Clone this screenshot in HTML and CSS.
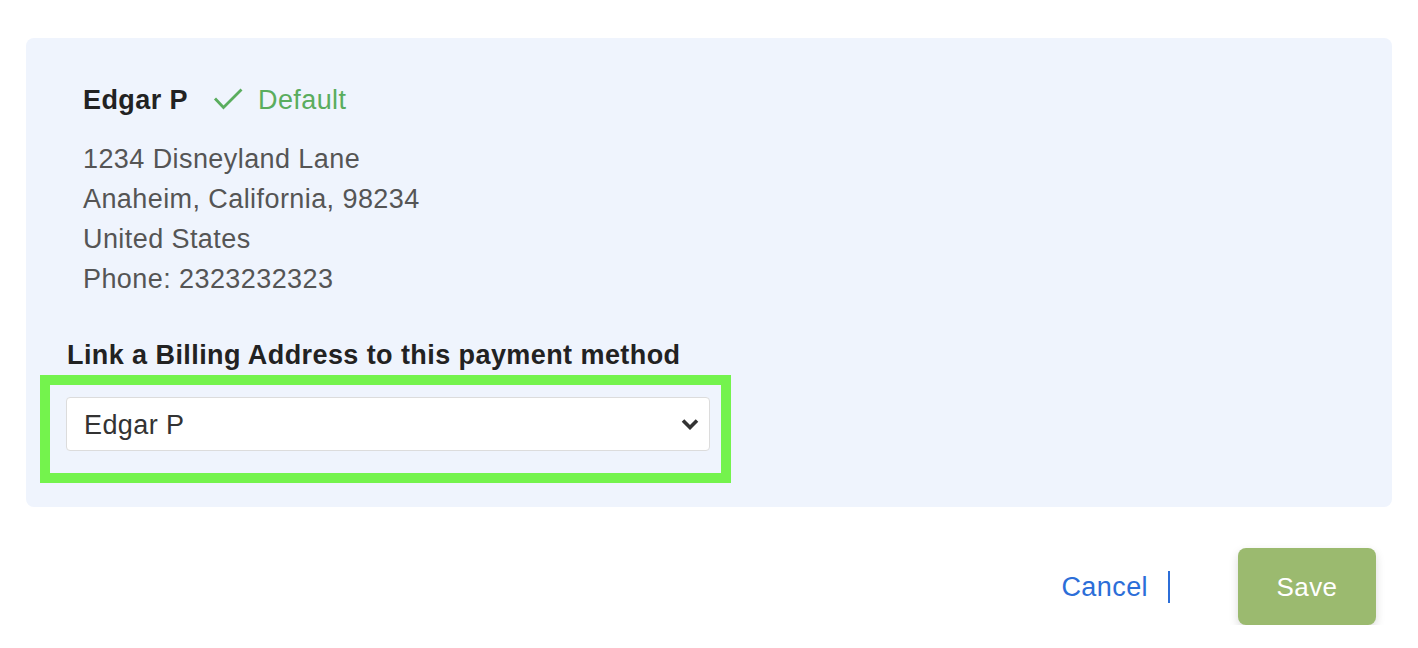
FILE: index.html
```html
<!DOCTYPE html>
<html lang="en">
<head>
<meta charset="utf-8">
<title>Billing Address</title>
<link rel="stylesheet" href="styles.css">
</head>
<body>
  <div class="panel">
    <div class="name-row">
      <span class="name">Edgar P</span>
      <svg class="check" width="32" height="24" viewBox="0 0 32 24" aria-hidden="true">
        <path d="M3 11.5 L11.5 20.5 L29.5 2.5" fill="none" stroke="#5aad5e" stroke-width="2.8" stroke-linecap="butt" stroke-linejoin="miter"/>
      </svg>
      <span class="default">Default</span>
    </div>
    <div class="address">
      <div>1234 Disneyland Lane</div>
      <div>Anaheim, California, 98234</div>
      <div>United States</div>
      <div>Phone: 2323232323</div>
    </div>
    <div class="heading">Link a Billing Address to this payment method</div>
    <div class="highlight">
      <div class="select">
        <span class="select-value">Edgar P</span>
        <svg class="chevron" width="18" height="12" viewBox="0 0 18 12" aria-hidden="true">
          <path d="M2 2.5 L9 9.5 L16 2.5" fill="none" stroke="#333" stroke-width="3.6" stroke-linecap="butt"/>
        </svg>
      </div>
    </div>
  </div>
  <div class="footer">
    <a class="cancel">Cancel</a>
    <span class="divider"></span>
    <button class="save">Save</button>
  </div>
</body>
</html>
```

FILE: styles.css
```css
* { box-sizing: border-box; }

body {
  margin: 0;
  padding: 38px 26px 0 26px;
  background: #ffffff;
  font-family: "Liberation Sans", Arial, Helvetica, sans-serif;
  font-size: 27px;
  letter-spacing: 0.42px;
}

.panel {
  background: #eff4fd;
  border-radius: 8px;
  padding: 42px 0 24px 14px;
}

.name-row {
  display: flex;
  align-items: center;
  margin-left: 43px;
  line-height: 40px;
}

.name {
  font-weight: bold;
  color: #222222;
}

.check {
  margin-left: 24px;
  display: block;
  position: relative;
  top: -1px;
}

.default {
  margin-left: 14px;
  color: #5aad5e;
}

.address {
  margin-top: 19px;
  margin-left: 43px;
  color: #555555;
  line-height: 40px;
}

.heading {
  margin-top: 37px;
  margin-left: 27px;
  font-weight: bold;
  color: #222222;
  line-height: 39px;
}

.highlight {
  width: 691px;
  border: 10px solid #74f34d;
  padding: 12px 11px 22px 16px;
}

.select {
  height: 54px;
  background: #ffffff;
  border: 1px solid #dcdcdc;
  border-radius: 4px;
  display: flex;
  align-items: center;
  justify-content: space-between;
  padding: 0 10px 0 17px;
  color: #333333;
}

.select-value {
  padding-top: 2px;
}

.chevron { display: block; }

.footer {
  display: flex;
  justify-content: flex-end;
  align-items: center;
  margin-top: 41px;
  padding-right: 16px;
}

.cancel {
  color: #2c6ed8;
  cursor: pointer;
  padding-top: 2px;
}

.divider {
  width: 2px;
  height: 32px;
  background: #2c6ed8;
  margin-left: 20px;
}

.save {
  margin-left: 68px;
  width: 138px;
  height: 77px;
  padding-top: 2px;
  border: none;
  border-radius: 8px;
  background: #9bba6f;
  color: #ffffff;
  font-family: inherit;
  font-size: 26px;
  letter-spacing: 0.42px;
  box-shadow: 0 4px 10px rgba(0, 0, 0, 0.15);
}
```
